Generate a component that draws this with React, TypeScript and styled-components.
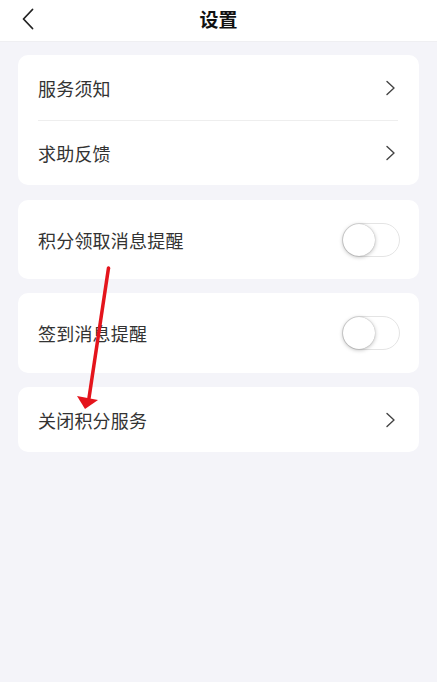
import React from "react";
import styled, { createGlobalStyle } from "styled-components";

const GlobalStyle = createGlobalStyle`
  html, body { margin: 0; padding: 0; }
  body {
    background: #f4f4f9;
    font-family: "Noto Sans CJK SC", "Noto Sans", sans-serif;
  }
`;

const Page = styled.div`
  position: relative;
  width: 437px;
  min-height: 682px;
  background: #f4f4f9;
`;

const Header = styled.header`
  height: 42px;
  background: #ffffff;
  border-bottom: 1px solid #efeff2;
  box-sizing: border-box;
  display: grid;
  grid-template-columns: 60px 1fr 60px;
  align-items: start;
`;

const BackButton = styled.button`
  border: none;
  background: transparent;
  padding: 0 0 0 22px;
  height: 37px;
  display: flex;
  align-items: center;
  cursor: pointer;
`;

const Title = styled.h1`
  margin: 0;
  text-align: center;
  font-size: 19px;
  font-weight: 700;
  color: #111111;
  line-height: 37px;
`;

const Content = styled.main`
  padding: 13px 18px;
  display: flex;
  flex-direction: column;
  gap: 14px;
`;

const Card = styled.section<{ $extraGap?: number }>`
  background: #ffffff;
  border-radius: 10px;
  overflow: hidden;
  margin-bottom: ${(p) => p.$extraGap ?? 0}px;
`;

const Row = styled.div<{ $height: number; $toggle?: boolean }>`
  height: ${(p) => p.$height}px;
  display: flex;
  align-items: center;
  justify-content: space-between;
  padding: 0 ${(p) => (p.$toggle ? 19 : 24)}px 0 20px;
  box-sizing: border-box;
`;

const Label = styled.span`
  font-size: 18px;
  color: #333333;
  letter-spacing: 0.2px;
`;

const Divider = styled.div`
  height: 1px;
  margin: 0 21px 0 20px;
  background: #eeeeee;
`;

const Switch = styled.div`
  position: relative;
  width: 58px;
  height: 34px;
  border-radius: 17px;
  border: 1px solid #e4e4e4;
  box-sizing: border-box;
  background: #ffffff;
`;

const Knob = styled.div`
  position: absolute;
  left: 0;
  top: 0;
  width: 32px;
  height: 32px;
  border-radius: 50%;
  background: #ffffff;
  box-shadow: 0 1px 4px rgba(0, 0, 0, 0.28), 0 0 1px rgba(0, 0, 0, 0.3);
`;

const Annotation = styled.svg`
  position: absolute;
  left: 0;
  top: 0;
  pointer-events: none;
`;

const Chevron = () => (
  <svg width="9" height="16" viewBox="0 0 9 16" fill="none">
    <path d="M1 1.5L8 8L1 14.5" stroke="#444" strokeWidth="1.4" strokeLinecap="round" strokeLinejoin="round" />
  </svg>
);

const LinkRow = ({ label, height }: { label: string; height: number }) => (
  <Row $height={height}>
    <Label>{label}</Label>
    <Chevron />
  </Row>
);

const ToggleRow = ({ label, height }: { label: string; height: number }) => (
  <Row $height={height} $toggle>
    <Label>{label}</Label>
    <Switch>
      <Knob />
    </Switch>
  </Row>
);

export default function App() {
  return (
    <>
      <GlobalStyle />
      <Page>
        <Header>
          <BackButton aria-label="返回">
            <svg width="12" height="22" viewBox="0 0 12 22" fill="none">
              <path d="M10.5 1.5L1.5 11L10.5 20.5" stroke="#222" strokeWidth="1.8" strokeLinecap="round" strokeLinejoin="round" />
            </svg>
          </BackButton>
          <Title>设置</Title>
          <span />
        </Header>
        <Content>
          <Card $extraGap={1}>
            <LinkRow label="服务须知" height={65} />
            <Divider />
            <LinkRow label="求助反馈" height={64} />
          </Card>
          <Card>
            <ToggleRow label="积分领取消息提醒" height={79} />
          </Card>
          <Card>
            <ToggleRow label="签到消息提醒" height={80} />
          </Card>
          <Card>
            <LinkRow label="关闭积分服务" height={65} />
          </Card>
        </Content>
        <Annotation width="437" height="682" viewBox="0 0 437 682">
          <line x1="108.5" y1="268" x2="89" y2="398" stroke="#e4141c" strokeWidth="3.5" strokeLinecap="round" />
          <polygon points="77,396 98,400 85,409" fill="#e4141c" />
        </Annotation>
      </Page>
    </>
  );
}
